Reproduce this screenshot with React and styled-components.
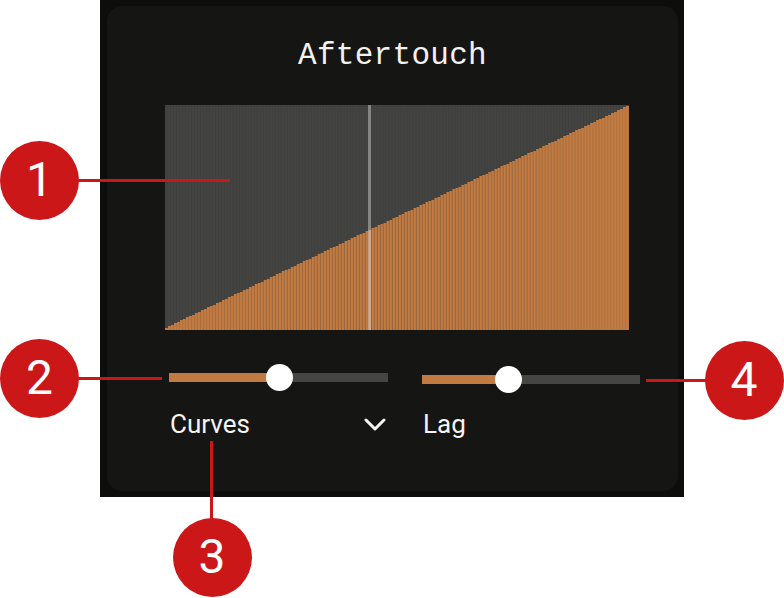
import React from 'react';
import styled, { createGlobalStyle } from 'styled-components';

const GlobalStyle = createGlobalStyle`
  html, body {
    margin: 0;
    padding: 0;
    background: #ffffff;
  }
  body {
    font-family: Roboto, "Liberation Sans", sans-serif;
  }
`;

const ORANGE = '#c17b42';
const TRACK = '#454543';

const Page = styled.div`
  position: relative;
  width: 784px;
  height: 598px;
  background: #ffffff;
  overflow: hidden;
`;

const Frame = styled.div`
  margin-left: 100px;
  width: 584px;
  height: 497px;
  box-sizing: border-box;
  padding: 6px 6px 6px 7px;
  background: #0d0d0b;
  display: flex;
`;

const Panel = styled.div`
  flex: 1;
  border-radius: 15px;
  background: #151513;
  display: flex;
  flex-direction: column;
  align-items: flex-start;
  padding: 33px 0 0 58px;
`;

const Title = styled.h1`
  align-self: center;
  margin: 0 0 0 -58px;
  font-family: "Liberation Mono", "DejaVu Sans Mono", monospace;
  font-weight: 400;
  font-size: 31px;
  line-height: 34px;
  letter-spacing: 0.3px;
  color: #f2f2f0;
`;

const ChartBox = styled.div`
  margin-top: 32px;
  width: 464px;
  height: 225px;
  background: #434341;
`;

const Controls = styled.div`
  margin: 34px 0 0 4px;
  display: grid;
  grid-template-columns: 219px 218px;
  column-gap: 34px;
`;

const Column = styled.div`
  display: flex;
  flex-direction: column;
  padding-top: ${p => p.$offset || 0}px;
`;

const SliderRoot = styled.div`
  position: relative;
  height: 27px;
  display: flex;
  align-items: center;
`;

const Track = styled.div`
  width: 100%;
  height: 9px;
  background: ${TRACK};
  display: flex;
`;

const Fill = styled.div`
  height: 100%;
  background: ${ORANGE};
`;

const Knob = styled.div`
  position: absolute;
  top: 0;
  width: 27px;
  height: 27px;
  margin-left: -13px;
  border-radius: 50%;
  background: #ffffff;
`;

const LabelRow = styled.div`
  margin-top: ${p => p.$gap}px;
  display: flex;
  align-items: center;
  justify-content: space-between;
  padding: 0 2px 0 1px;
`;

const Label = styled.span`
  font-family: Roboto, "Liberation Sans", sans-serif;
  font-size: 26px;
  line-height: 30px;
  color: #f4f4f4;
`;

const Chevron = styled.svg`
  width: 22px;
  height: 13px;
  display: block;
`;

const Badge = styled.div`
  position: absolute;
  left: ${p => p.$x - 39.5}px;
  top: ${p => p.$y - 39.5}px;
  width: 79px;
  height: 79px;
  border-radius: 50%;
  background: #cc1719;
  color: #ffffff;
  display: flex;
  align-items: center;
  justify-content: center;
  font-family: Roboto, "Liberation Sans", sans-serif;
  font-size: 48px;
  line-height: 1;
`;

const Leader = styled.div`
  position: absolute;
  left: ${p => p.$x}px;
  top: ${p => p.$y}px;
  width: ${p => p.$w}px;
  height: ${p => p.$h}px;
  background: #cc1719;
`;

function Slider({ value }) {
  return (
    <SliderRoot>
      <Track>
        <Fill style={{ width: `${value * 100}%` }} />
      </Track>
      <Knob style={{ left: `${value * 100}%` }} />
    </SliderRoot>
  );
}

// linear response curve drawn as a row of thin bars
function CurveChart() {
  const w = 464;
  const h = 225;
  const n = 155;
  const bw = w / n;
  const bars = [];
  for (let i = 0; i < n; i++) {
    const bh = Math.round(((i + 1) / n) * (h - 2)) + 1;
    bars.push(
      <rect key={i} x={i * bw} y={h - bh} width={bw} height={bh} fill={ORANGE} />
    );
  }
  return (
    <ChartBox>
      <svg width={w} height={h} viewBox={`0 0 ${w} ${h}`}>
        <defs>
          <pattern id="bar-lines" width={bw} height={h} patternUnits="userSpaceOnUse">
            <rect x={bw - 0.6} y="0" width="0.6" height={h} fill="rgba(0,0,0,0.1)" />
          </pattern>
        </defs>
        {bars}
        <rect x="0" y="0" width={w} height={h} fill="url(#bar-lines)" />
        <rect x="203" y="0" width="3" height={h} fill="rgba(255,255,255,0.36)" />
      </svg>
    </ChartBox>
  );
}

export default function App() {
  return (
    <Page>
      <GlobalStyle />
      <Frame>
        <Panel>
          <Title>Aftertouch</Title>
          <CurveChart />
          <Controls>
            <Column>
              <Slider value={0.502} />
              <LabelRow $gap={18}>
                <Label>Curves</Label>
                <Chevron viewBox="0 0 22 13">
                  <path d="M2 2 L11 11 L20 2" fill="none" stroke="#f4f4f4" strokeWidth="3" strokeLinecap="round" strokeLinejoin="round" />
                </Chevron>
              </LabelRow>
            </Column>
            <Column $offset={2}>
              <Slider value={0.394} />
              <LabelRow $gap={16}>
                <Label>Lag</Label>
              </LabelRow>
            </Column>
          </Controls>
        </Panel>
      </Frame>

      <Leader $x={78} $y={179} $w={152} $h={3} />
      <Leader $x={78} $y={377} $w={84} $h={3} />
      <Leader $x={646} $y={379} $w={60} $h={3} />
      <Leader $x={210} $y={441} $w={3} $h={78} />

      <Badge $x={39.5} $y={180}>1</Badge>
      <Badge $x={39.5} $y={378}>2</Badge>
      <Badge $x={212} $y={557}>3</Badge>
      <Badge $x={744} $y={380}>4</Badge>
    </Page>
  );
}
